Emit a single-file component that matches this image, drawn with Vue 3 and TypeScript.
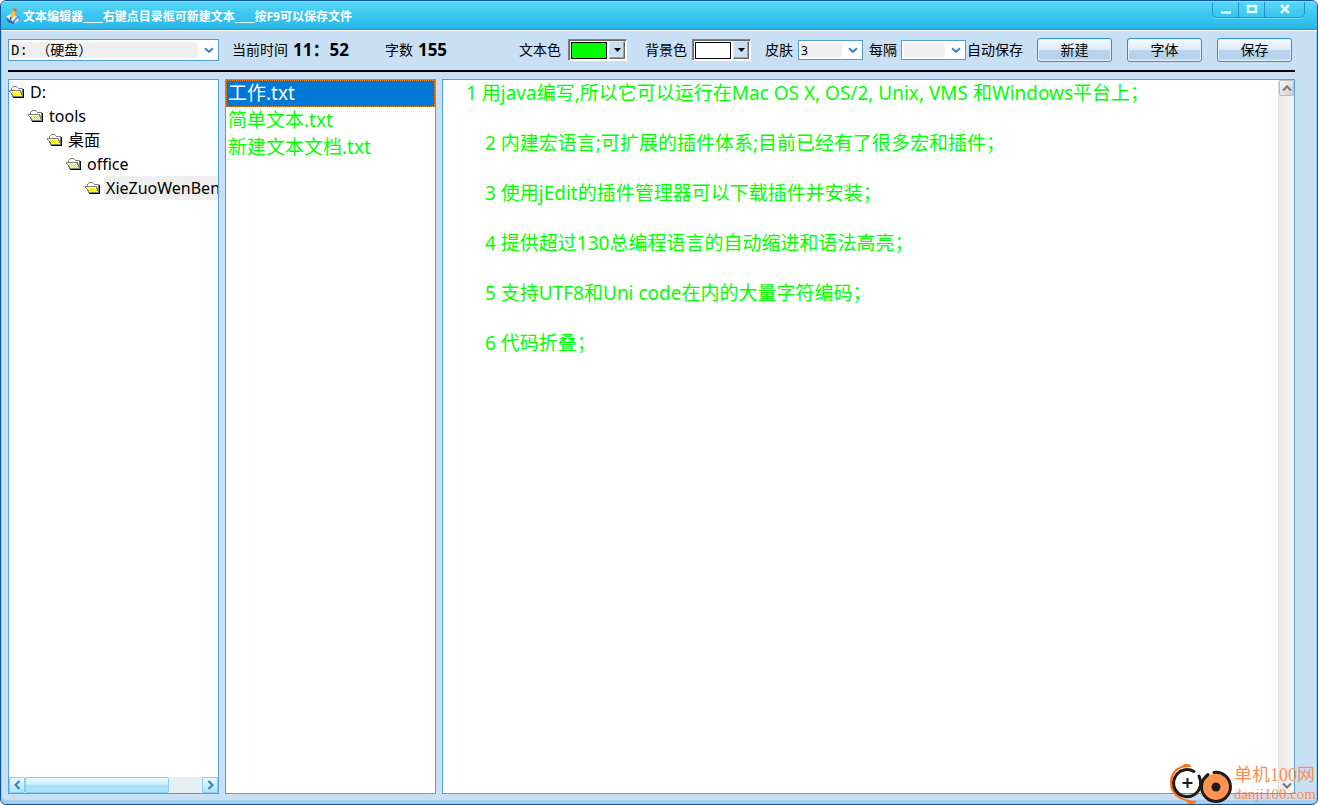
<script setup lang="ts">
import { computed, ref } from 'vue'

interface Folder {
  name: string
  level: number
}

const folders: Folder[] = [
  { name: 'D:', level: 0 },
  { name: 'tools', level: 1 },
  { name: '桌面', level: 2 },
  { name: 'office', level: 3 },
  { name: 'XieZuoWenBen', level: 4 },
]
const files: string[] = ['工作.txt', '简单文本.txt', '新建文本文档.txt']
const actions: string[] = ['新建', '字体', '保存']

const currentFolder = ref('XieZuoWenBen')
const currentFile = ref('工作.txt')
const drive = ref('D: （硬盘）')
const skin = ref('3')
const interval = ref('')
const textColor = ref('#00ff00')
const backColor = ref('#ffffff')

const content = ref(
  [
    '\u30001 用java编写,所以它可以运行在Mac OS X, OS/2, Unix, VMS 和Windows平台上；',
    '\u3000\u30002 内建宏语言;可扩展的插件体系;目前已经有了很多宏和插件；',
    '\u3000\u30003 使用jEdit的插件管理器可以下载插件并安装；',
    '\u3000\u30004 提供超过130总编程语言的自动缩进和语法高亮；',
    '\u3000\u30005 支持UTF8和Uni code在内的大量字符编码；',
    '\u3000\u30006 代码折叠；',
  ].join('\n\n'),
)

const editorColors = computed(() => ({
  color: textColor.value,
  backgroundColor: backColor.value,
}))
</script>

<template>
  <div class="window">
    <header class="titlebar">
      <svg class="app-icon" width="16" height="16" viewBox="0 0 16 16" aria-hidden="true">
        <path d="M0 10L5 6L14 8L15 11L9 16L3 14Z" fill="#5b9be0" />
        <path d="M1 9L5 6L12 8L8 13Z" fill="#d9efff" />
        <path d="M1 10L8 14L14 9L13 12L8 16L3 14Z" fill="#2d68bd" />
        <path d="M9 14L13 10L14 12L10 15Z" fill="#e6f6ff" />
        <path d="M5 9L8 2L11 3L9 9L6 11Z" fill="#f7c431" />
        <path d="M8 3L9 0L12 1L11 4Z" fill="#ee6a2c" />
        <path d="M5 9L7 10L5 12Z" fill="#3a3c50" />
      </svg>
      <h1>文本编辑器____右键点目录框可新建文本____按F9可以保存文件</h1>
      <div class="window-controls">
        <button type="button" aria-label="最小化">
          <svg width="12" height="10" viewBox="0 0 12 10"><path d="M1 8.5H11" stroke="#e4f8ff" stroke-width="2.6" /></svg>
        </button>
        <button type="button" aria-label="最大化">
          <svg width="12" height="10" viewBox="0 0 12 10"><rect x="2" y="2" width="8" height="6" fill="none" stroke="#e4f8ff" stroke-width="2.4" /></svg>
        </button>
        <button type="button" class="close" aria-label="关闭">
          <svg width="12" height="10" viewBox="0 0 12 10"><path d="M2 1L10 9M10 1L2 9" stroke="#e4f8ff" stroke-width="2.6" /></svg>
        </button>
      </div>
    </header>

    <main>
      <div class="toolbar">
        <span class="combo drive">
          <select v-model="drive" aria-label="驱动器"><option>D: （硬盘）</option></select>
          <svg class="chevron" width="10" height="7" viewBox="0 0 10 7" aria-hidden="true"><path d="M1 1.2L5 4.8L9 1.2" /></svg>
        </span>
        <p class="stat clock">当前时间 <strong>11：52</strong></p>
        <p class="stat">字数 <strong>155</strong></p>

        <label class="field first">
          文本色
          <span class="picker">
            <input v-model="textColor" type="color" />
            <span class="drop"><svg width="7" height="4" viewBox="0 0 7 4"><path d="M0 0H7L3.5 4Z" /></svg></span>
          </span>
        </label>
        <label class="field second">
          背景色
          <span class="picker">
            <input v-model="backColor" type="color" />
            <span class="drop"><svg width="7" height="4" viewBox="0 0 7 4"><path d="M0 0H7L3.5 4Z" /></svg></span>
          </span>
        </label>
        <label class="field skin">
          皮肤
          <span class="combo small">
            <select v-model="skin"><option>3</option></select>
            <svg class="chevron" width="10" height="7" viewBox="0 0 10 7" aria-hidden="true"><path d="M1 1.2L5 4.8L9 1.2" /></svg>
          </span>
        </label>
        <label class="field every">
          每隔
          <span class="combo small">
            <select v-model="interval"><option></option></select>
            <svg class="chevron" width="10" height="7" viewBox="0 0 10 7" aria-hidden="true"><path d="M1 1.2L5 4.8L9 1.2" /></svg>
          </span>
        </label>
        <span class="suffix">自动保存</span>
        <div class="actions">
          <button v-for="action in actions" :key="action" type="button">{{ action }}</button>
        </div>
      </div>

      <div class="panes">
        <section class="pane side tree">
          <svg class="defs" width="0" height="0" aria-hidden="true">
            <pattern id="folder-fill" width="2" height="2" patternUnits="userSpaceOnUse">
              <rect width="2" height="2" fill="#ffffb8" />
              <path d="M0 0H1V1H0ZM1 1H2V2H1Z" fill="#f5e600" />
            </pattern>
          </svg>
          <ul>
            <li v-for="folder in folders" :key="folder.name" :class="'level-' + folder.level">
              <button
                type="button"
                :class="{ current: folder.name === currentFolder }"
                @click="currentFolder = folder.name"
              >
                <svg width="16" height="14" viewBox="0 0 16 14" shape-rendering="crispEdges" aria-hidden="true">
                  <path d="M2 5V3H3V2H4V1H8V2H9V3H14V12H3V5Z" fill="#808080" />
                  <path d="M4 2H8V3H9V4H13V5H3V3H4Z" fill="#fff" />
                  <path d="M12 5H13V10H12Z" fill="url(#folder-fill)" />
                  <path d="M14 4H15V13H4V12H14Z" fill="#000" />
                  <path d="M0 5H12V7H13V10H14V12H3V10H2V8H1V7H0Z" fill="#808080" />
                  <path d="M1 6H11V8H12V10H13V11H4V9H3V8H2V7H1Z" fill="#fff" />
                  <path d="M3 7H11V8H12V10H13V11H4V9H3Z" fill="url(#folder-fill)" />
                </svg>
                <span>{{ folder.name }}</span>
              </button>
            </li>
          </ul>
          <div class="hscroll">
            <button type="button" aria-label="向左滚动"><svg width="7" height="10" viewBox="0 0 7 10"><path d="M5.5 1L1.5 5L5.5 9" /></svg></button>
            <span class="thumb"></span>
            <button type="button" class="end" aria-label="向右滚动"><svg width="7" height="10" viewBox="0 0 7 10"><path d="M1.5 1L5.5 5L1.5 9" /></svg></button>
          </div>
        </section>

        <section class="pane side files">
          <ul>
            <li v-for="file in files" :key="file">
              <button type="button" :class="{ chosen: file === currentFile }" @click="currentFile = file">{{ file }}</button>
            </li>
          </ul>
        </section>

        <section class="pane editor">
          <textarea v-model="content" aria-label="文本内容" spellcheck="false" :style="editorColors"></textarea>
          <div class="vscroll">
            <button type="button" aria-label="向上滚动"><svg width="10" height="7" viewBox="0 0 10 7"><path d="M1 5.5L5 1.5L9 5.5" /></svg></button>
            <button type="button" class="plain" aria-label="向下滚动"><svg width="10" height="7" viewBox="0 0 10 7"><path d="M1 1.5L5 5.5L9 1.5" /></svg></button>
          </div>
        </section>
      </div>
    </main>

    <div class="watermark">
      <svg width="64" height="42" viewBox="0 0 64 42" aria-hidden="true">
        <path d="M21 4C20 0 14 0 12 3C3 5 -1 14 0 22C1 31 8 36 16 38C18 42 25 42 27 38C19 38 10 35 6 30C0 22 2 11 8 7C12 4 16 4 21 4Z" fill="#ff7417" />
        <path d="M24 8.500A13.500 13.500 0 1 0 30.500 22C31 18 30 15 29 13" fill="none" stroke="#231a18" stroke-width="3" stroke-linecap="round" />
        <path d="M17.500 15V25M12.500 20H22.500" stroke="#231a18" stroke-width="2" />
        <circle cx="46" cy="24" r="13.500" fill="#ff9450" />
        <path d="M44 9.500A14.500 14.500 0 1 1 32 20C33 16 35 14 38 11.500" fill="none" stroke="#231a18" stroke-width="3" stroke-linecap="round" />
        <circle cx="46" cy="24" r="4.500" fill="#231a18" />
      </svg>
      <p><span class="site">单机100网</span><span class="domain">danji100.com</span></p>
    </div>
  </div>
</template>

<style>
body {
  margin: 0;
  background: #fff;
}
</style>

<style scoped>
* {
  box-sizing: border-box;
}
.window {
  position: relative;
  display: flex;
  flex-direction: column;
  height: 100vh;
  overflow: hidden;
  border: 1px solid #0a559b;
  border-radius: 6px;
  background: #c9dff3;
  box-shadow: inset 0 0 0 1px #7fdcf8, inset 0 -4px 0 #a9cff0;
  color: #000;
  font-family: "Noto Sans", "Noto Sans CJK SC", sans-serif;
  font-size: 14px;
}
h1,
p,
ul {
  margin: 0;
  padding: 0;
}
ul {
  list-style: none;
}
button {
  padding: 0;
  border: 0;
  background: none;
  color: inherit;
  font: inherit;
}
svg {
  display: block;
  flex: none;
}

.titlebar {
  display: flex;
  align-items: center;
  flex: none;
  height: 30px;
  padding: 0 12px 0 4px;
  border-top: 1px solid #7be4fb;
  border-bottom: 1px solid #fff;
  border-radius: 5px 5px 0 0;
  background: linear-gradient(#59d7f7, #3fcaf1 35%, #2ab9e9 93%, #1a9fd9 97%);
}
h1 {
  margin-left: 2px;
  padding-top: 2px;
  color: #fff;
  font-size: 12px;
  font-weight: 700;
  line-height: 16px;
}
.window-controls {
  display: flex;
  align-self: flex-start;
  height: 16px;
  margin-left: auto;
  border: 1px solid #1f93cb;
  border-top: 0;
  border-radius: 0 0 5px 5px;
  box-shadow: 0 1px 0 #70dcf8;
}
.window-controls button {
  display: flex;
  justify-content: center;
  width: 26px;
  padding-top: 2px;
  border-right: 1px solid #1f93cb;
}
.window-controls .close {
  width: 39px;
  border: 0;
}

main {
  display: flex;
  flex: 1;
  flex-direction: column;
  min-height: 0;
  padding: 0 22px 10px 7px;
}
.toolbar {
  display: flex;
  align-items: center;
  flex: none;
  height: 41px;
  padding: 0 3px 1px 0;
  border-bottom: 2px solid #000;
  line-height: 20px;
  white-space: nowrap;
}
.combo {
  display: grid;
  flex: none;
  align-items: center;
  border: 1px solid #4f9fd3;
  background: #fff;
}
.combo select {
  grid-area: 1 / 1;
  width: 100%;
  height: 100%;
  padding: 0 20px 0 2px;
  appearance: none;
  border: 0;
  border-radius: 0;
  background: linear-gradient(#efefef, #efefef) 2px 2px / calc(100% - 22px) calc(100% - 4px) no-repeat;
  color: #000;
  font: 12px "Noto Sans", "Noto Sans CJK SC", sans-serif;
}
.combo .chevron {
  grid-area: 1 / 1;
  justify-self: end;
  margin-right: 4px;
  pointer-events: none;
}
.chevron path {
  fill: none;
  stroke: #3787cd;
  stroke-width: 2;
}
.drive {
  width: 211px;
  height: 22px;
}
.drive select {
  padding-top: 2px;
  font: 14px "Liberation Mono", "Noto Sans CJK SC", monospace;
}
.small {
  width: 65px;
  height: 20px;
}
.stat {
  display: flex;
  align-items: center;
  gap: 5px;
  margin-left: 13px;
}
.clock + .stat {
  margin-left: 36px;
}
.stat strong {
  font-size: 17px;
}
.field {
  display: flex;
  align-items: center;
  gap: 5px;
}
.first {
  margin-left: auto;
  gap: 7px;
}
.second {
  margin-left: 18px;
}
.skin {
  margin-left: 14px;
}
.every {
  margin-left: 6px;
  gap: 4px;
}
.suffix {
  margin-left: 1px;
}
.picker {
  display: flex;
  align-items: center;
  gap: 2px;
  height: 22px;
  padding: 1px 1px 1px 2px;
  border: 1px solid #808080;
  border-right-color: #fff;
  border-bottom-color: #fff;
  background: #fff;
  box-shadow: inset 1px 1px 0 #696969;
}
.picker input {
  width: 36px;
  height: 17px;
  padding: 0;
  appearance: none;
  border: 1px solid #000;
  border-radius: 0;
  background: none;
}
.picker input::-webkit-color-swatch-wrapper {
  padding: 0;
}
.picker input::-webkit-color-swatch {
  border: 0;
  border-radius: 0;
}
.drop {
  display: flex;
  align-items: center;
  justify-content: center;
  width: 16px;
  height: 18px;
  border: 1px solid #e3e3e3;
  border-right-color: #696969;
  border-bottom-color: #696969;
  background: #c9dff3;
  box-shadow: inset -1px -1px 0 #a0a0a0;
}
.actions {
  display: flex;
  gap: 15px;
  margin-left: 14px;
}
.actions button {
  width: 75px;
  height: 24px;
  border: 1px solid #2f8fd0;
  border-radius: 3px;
  background: linear-gradient(#f8fcff, #dcebf8 48%, #b9d5ee 52%, #b4d1ec 85%, #cae0f4);
  box-shadow: inset 0 0 0 1px #e5f3fd;
  line-height: 22px;
}

.panes {
  display: flex;
  flex: 1;
  gap: 6px;
  min-height: 0;
  padding-top: 7px;
}
.pane {
  display: flex;
  min-width: 0;
  border: 1px solid #4fa3d8;
  background: #fff;
}
.side {
  flex: none;
  flex-direction: column;
  width: 211px;
  overflow: hidden;
}
.defs {
  height: 0;
}
.tree ul {
  flex: 1;
  overflow: hidden;
}
.tree button {
  display: flex;
  align-items: center;
  gap: 3px;
}
.tree li button span {
  padding: 0 2px;
  font-size: 16px;
  line-height: 24px;
}
.tree .current span {
  background: #efefef;
}
.level-1 {
  padding-left: 19px;
}
.level-2 {
  padding-left: 38px;
}
.level-3 {
  padding-left: 57px;
}
.level-4 {
  padding-left: 76px;
}
.hscroll {
  display: flex;
  flex: none;
  height: 16px;
  background: #e6eef1;
}
.hscroll button {
  justify-content: center;
  width: 16px;
  border: 1px solid #82d0f5;
  border-radius: 1px;
  background: linear-gradient(#e9f8ff, #b2e2fa);
}
.hscroll path {
  fill: none;
  stroke: #2f7fc8;
  stroke-width: 2;
}
.thumb {
  width: 69%;
  border: 1px solid #82d0f5;
  border-radius: 2px;
  background: linear-gradient(#eefaff, #c9edfd 45%, #a8def9 55%, #b0e3fb);
}
.hscroll .end {
  margin-left: auto;
}

.files button {
  display: block;
  width: 100%;
  height: 27px;
  padding: 0 1px;
  border: 1px solid transparent;
  color: #0f0;
  font-size: 19px;
  line-height: 25px;
  text-align: left;
}
.files .chosen {
  border: 1px dotted #f08728;
  background: #0078d7;
  color: #fff;
}

.editor {
  flex: 1;
}
textarea {
  flex: 1;
  min-width: 0;
  padding: 1px 1px 1px 4px;
  border: 0;
  outline: 0;
  resize: none;
  font: 19px/25px "Noto Sans", "Noto Sans CJK SC", sans-serif;
}
.vscroll {
  display: flex;
  flex: none;
  flex-direction: column;
  justify-content: space-between;
  width: 16px;
  border-left: 1px solid #e2e2e2;
  background: linear-gradient(90deg, #e9e9e9, #f5f5f5);
}
.vscroll button {
  display: flex;
  align-items: center;
  justify-content: center;
  height: 16px;
  border: 1px solid #bdbdbd;
  border-radius: 2px;
  background: linear-gradient(135deg, #f8f8f8, #cfcfcf);
}
.vscroll .plain {
  border: 0;
  background: none;
}
.vscroll path {
  fill: none;
  stroke: #777;
  stroke-width: 2;
}

.watermark {
  position: absolute;
  right: 1px;
  bottom: -1px;
  display: flex;
  align-items: center;
  color: #ff8c50;
  font-family: "Liberation Serif", "Noto Sans CJK SC", serif;
  white-space: nowrap;
  pointer-events: none;
}
.watermark p {
  display: flex;
  flex-direction: column;
}
.site {
  font-size: 18px;
  line-height: 20px;
}
.domain {
  font-size: 15px;
  line-height: 18px;
}
</style>
